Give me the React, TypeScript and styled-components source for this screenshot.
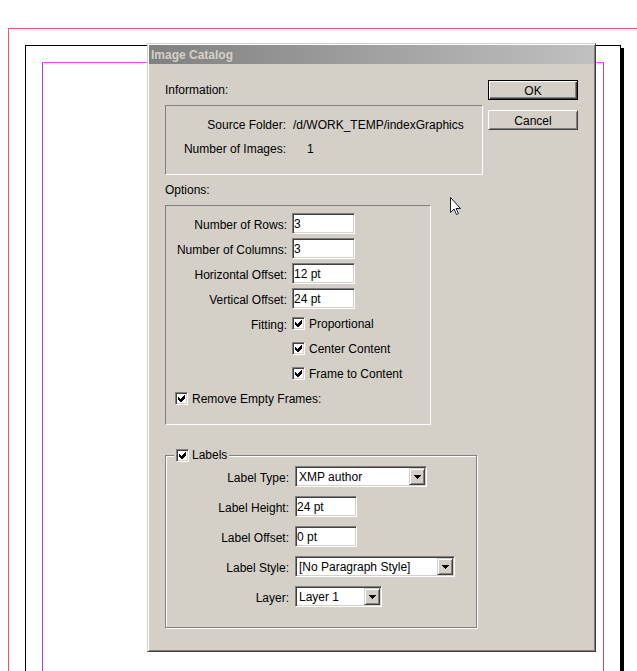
import React from "react";
import styled, { createGlobalStyle } from "styled-components";

const Global = createGlobalStyle`
  *, *::before, *::after { box-sizing: border-box; }
  html, body { margin: 0; padding: 0; background: #fff; }
  body {
    font-family: "Liberation Sans", Arial, sans-serif;
    font-size: 12px;
    color: #000;
    overflow: hidden;
  }
`;

const Scene = styled.div`
  position: relative;
  width: 637px;
  height: 671px;
  overflow: hidden;
  background: #fff;
`;

const Pasteboard = styled.div`
  margin: 28px 0 0 8px;
  height: 643px;
  border-top: 1px solid #f4566b;
  border-left: 1px solid #f4566b;
  padding: 16px 0 0 16px;
`;

const Page = styled.div`
  width: 596px;
  height: 700px;
  border: 1px solid #000;
  box-shadow: 3px 3px 0 #000;
  padding: 16px 0 0 16px;
  background: #fff;
`;

const MarginGuides = styled.div`
  width: 562px;
  height: 700px;
  border-top: 1px solid #ff44ff;
  border-left: 1px solid #9b45f5;
  border-right: 1px solid #9b45f5;
`;

const Window = styled.div`
  position: absolute;
  left: 147px;
  top: 43px;
  width: 449px;
  height: 609px;
  background: #d4d0c8;
  border: 1px solid;
  border-color: #d4d0c8 #404040 #404040 #d4d0c8;
  box-shadow: inset 1px 1px 0 #fff, inset -1px -1px 0 #808080;
  padding: 1px;
  display: flex;
  flex-direction: column;
`;

const TitleBar = styled.div`
  height: 19px;
  line-height: 20px;
  padding-left: 2px;
  background: linear-gradient(to right, #808080, #c0c0c0);
  color: #d4d0c8;
  font-weight: bold;
  font-size: 12px;
`;

const Body = styled.div`
  display: grid;
  grid-template-columns: 318px 90px;
  column-gap: 5px;
  align-items: start;
  padding: 16px 15px 0 16px;
`;

const MainColumn = styled.div`
  display: flex;
  flex-direction: column;
`;

const ButtonColumn = styled.div`
  display: flex;
  flex-direction: column;
  gap: 10px;
`;

const PushButton = styled.div<{ $default?: boolean }>`
  height: 20px;
  display: flex;
  align-items: center;
  justify-content: center;
  padding-top: 1px;
  background: #d4d0c8;
  border: 1px solid;
  border-color: ${(p) => (p.$default ? "#000" : "#fff #404040 #404040 #fff")};
  box-shadow: ${(p) =>
    p.$default
      ? "inset 1px 1px 0 #fff, inset -1px -1px 0 #404040, inset -2px -2px 0 #808080"
      : "inset 1px 1px 0 #d4d0c8, inset -1px -1px 0 #808080"};
`;

const SectionLabel = styled.div<{ $gap: number }>`
  margin-top: ${(p) => p.$gap}px;
  height: 14px;
  line-height: 16px;
`;

const InfoBox = styled.div`
  margin-top: 9px;
  height: 70px;
  border: 1px solid;
  border-color: #808080 #fff #fff #808080;
  padding: 11px 0 0 15px;
  display: grid;
  grid-template-columns: 105px auto;
  column-gap: 7px;
  row-gap: 8px;
  align-content: start;
  line-height: 16px;
`;

const InfoLabel = styled.div`
  text-align: right;
  white-space: nowrap;
`;

const InfoValue = styled.div<{ $indent?: number }>`
  padding-left: ${(p) => p.$indent ?? 0}px;
  white-space: nowrap;
`;

const OptionsBox = styled.div`
  margin-top: 9px;
  width: 266px;
  height: 220px;
  border: 1px solid;
  border-color: #808080 #fff #fff #808080;
  padding: 7px 0 0 9px;
  display: grid;
  grid-template-columns: 112px auto;
  column-gap: 5px;
  grid-auto-rows: 21px;
  row-gap: 4px;
  align-content: start;
`;

const FieldLabel = styled.div`
  text-align: right;
  white-space: nowrap;
  align-self: center;
  padding-top: 2px;
`;

const Spacer = styled.div``;

const TextField = styled.input<{ $w: number }>`
  width: ${(p) => p.$w}px;
  height: 21px;
  margin: 0;
  padding: 1px 0 0 1px;
  font-family: "Liberation Sans", Arial, sans-serif;
  font-size: 12px;
  color: #000;
  background: #fff;
  border: 1px solid;
  border-color: #808080 #fff #fff #808080;
  box-shadow: inset 1px 1px 0 #404040, inset -1px -1px 0 #d4d0c8;
  outline: none;
  border-radius: 0;
`;

const CheckRow = styled.div<{ $span?: boolean }>`
  display: flex;
  align-items: center;
  gap: 4px;
  white-space: nowrap;
  line-height: 15px;
  ${(p) => (p.$span ? "grid-column: 1 / -1;" : "")}
`;

const CheckText = styled.span`
  padding-top: 2px;
`;

const CheckBoxFrame = styled.span`
  width: 13px;
  height: 13px;
  flex: none;
  display: flex;
  align-items: center;
  justify-content: center;
  background: #fff;
  border: 1px solid;
  border-color: #808080 #fff #fff #808080;
  box-shadow: inset 1px 1px 0 #404040, inset -1px -1px 0 #d4d0c8;
`;

const LabelsGroup = styled.fieldset`
  margin: 24px 0 0 0;
  width: 312px;
  min-width: 0;
  border: 1px solid #808080;
  box-shadow: inset 1px 1px 0 #fff, 1px 1px 0 #fff;
  padding: 4px 0 20px 0;
  display: grid;
  grid-template-columns: 123px auto;
  column-gap: 6px;
  grid-auto-rows: 21px;
  row-gap: 9px;
`;

const Legend = styled.legend`
  margin-left: 8px;
  padding: 0 2px;
  height: 13px;
  line-height: 13px;
  display: flex;
  align-items: center;
  gap: 3px;
  background: #d4d0c8;
`;

const Dropdown = styled.div<{ $w: number }>`
  width: ${(p) => p.$w}px;
  height: 21px;
  display: flex;
  align-items: stretch;
  background: #fff;
  border: 1px solid;
  border-color: #808080 #fff #fff #808080;
  box-shadow: inset 1px 1px 0 #404040, inset -1px -1px 0 #d4d0c8;
  padding: 1px;
`;

const DropValue = styled.div`
  flex: 1;
  padding: 1px 0 0 2px;
  line-height: 17px;
  white-space: nowrap;
  overflow: hidden;
`;

const DropButton = styled.div`
  width: 16px;
  flex: none;
  display: flex;
  align-items: center;
  justify-content: center;
  background: #d4d0c8;
  border: 1px solid;
  border-color: #d4d0c8 #404040 #404040 #d4d0c8;
  box-shadow: inset 1px 1px 0 #fff, inset -1px -1px 0 #808080;
`;

const Cursor = styled.svg`
  position: absolute;
  left: 450px;
  top: 197px;
`;

function CheckMark() {
  return (
    <svg width="7" height="7" viewBox="0 0 7 7" shapeRendering="crispEdges">
      <path d="M0 2 L2 4 L6 0 L7 0 L7 3 L3 7 L2 7 L0 5 Z" fill="#000" />
    </svg>
  );
}

function CheckBox() {
  return (
    <CheckBoxFrame>
      <CheckMark />
    </CheckBoxFrame>
  );
}

function Arrow() {
  return (
    <svg width="7" height="4" viewBox="0 0 7 4" shapeRendering="crispEdges">
      <path d="M0 0 H7 L3.5 4 Z" fill="#000" />
    </svg>
  );
}

function Select({ value, width }: { value: string; width: number }) {
  return (
    <Dropdown $w={width}>
      <DropValue>{value}</DropValue>
      <DropButton>
        <Arrow />
      </DropButton>
    </Dropdown>
  );
}

function Check({ label, span }: { label: string; span?: boolean }) {
  return (
    <CheckRow $span={span}>
      <CheckBox />
      <CheckText>{label}</CheckText>
    </CheckRow>
  );
}

export default function App() {
  return (
    <Scene>
      <Global />
      <Pasteboard>
        <Page>
          <MarginGuides />
        </Page>
      </Pasteboard>

      <Window>
        <TitleBar>Image Catalog</TitleBar>
        <Body>
          <MainColumn>
            <SectionLabel $gap={2}>Information:</SectionLabel>
            <InfoBox>
              <InfoLabel>Source Folder:</InfoLabel>
              <InfoValue>/d/WORK_TEMP/indexGraphics</InfoValue>
              <InfoLabel>Number of Images:</InfoLabel>
              <InfoValue $indent={14}>1</InfoValue>
            </InfoBox>

            <SectionLabel $gap={7}>Options:</SectionLabel>
            <OptionsBox>
              <FieldLabel>Number of Rows:</FieldLabel>
              <TextField $w={63} readOnly value="3" />
              <FieldLabel>Number of Columns:</FieldLabel>
              <TextField $w={63} readOnly value="3" />
              <FieldLabel>Horizontal Offset:</FieldLabel>
              <TextField $w={63} readOnly value="12 pt" />
              <FieldLabel>Vertical Offset:</FieldLabel>
              <TextField $w={63} readOnly value="24 pt" />
              <FieldLabel>Fitting:</FieldLabel>
              <Check label="Proportional" />
              <Spacer />
              <Check label="Center Content" />
              <Spacer />
              <Check label="Frame to Content" />
              <Check label="Remove Empty Frames:" span />
            </OptionsBox>

            <LabelsGroup>
              <Legend>
                <CheckBox />
                Labels
              </Legend>
              <FieldLabel>Label Type:</FieldLabel>
              <Select value="XMP author" width={132} />
              <FieldLabel>Label Height:</FieldLabel>
              <TextField $w={62} readOnly value="24 pt" />
              <FieldLabel>Label Offset:</FieldLabel>
              <TextField $w={62} readOnly value="0 pt" />
              <FieldLabel>Label Style:</FieldLabel>
              <Select value="[No Paragraph Style]" width={160} />
              <FieldLabel>Layer:</FieldLabel>
              <Select value="Layer 1" width={87} />
            </LabelsGroup>
          </MainColumn>

          <ButtonColumn>
            <PushButton $default>OK</PushButton>
            <PushButton>Cancel</PushButton>
          </ButtonColumn>
        </Body>
      </Window>

      <Cursor width="13" height="20" viewBox="0 0 13 20">
        <path
          d="M0.5 0.5 L0.5 15.5 L4 12 L6.5 17.5 L8.5 16.5 L6 11.5 L10.5 11.5 Z"
          fill="#fff"
          stroke="#1a1a2a"
          strokeWidth="1"
          strokeLinejoin="miter"
        />
      </Cursor>
    </Scene>
  );
}
